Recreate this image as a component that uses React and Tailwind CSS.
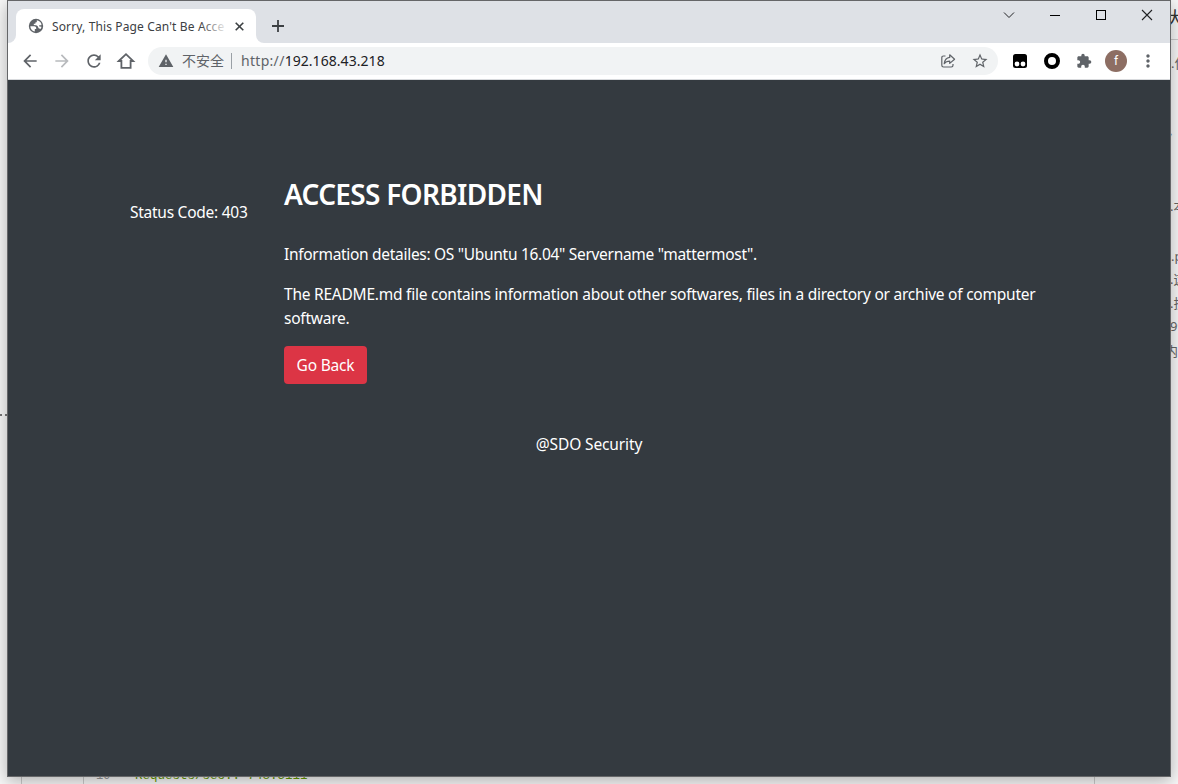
import React from 'react';
import { MdArrowBack, MdArrowForward, MdRefresh, MdStarBorder, MdExtension, MdWarning, MdMoreVert } from 'react-icons/md';

function Globe() {
  return (
    <svg className="h-4 w-4 shrink-0" viewBox="0 0 16 16">
      <circle cx="8" cy="8" r="7.2" fill="#5f6368" />
      <path d="M2.300 8.300H6.200C7.600 8.300 8.200 9 8.200 10V11H6.800V13.600C4.300 13.200 2.400 11 2.300 8.300ZM8.800 2.300C11 2.500 12.700 4 13.400 6.100V7.200H11.800C10.800 7.200 10.700 8.400 11.700 8.500L13.500 8.700C13.300 9.500 13 10.200 12.500 10.900L10.600 10.200C10 8.400 9.200 7.500 7.800 7.300L5.800 7.100V5.800H7.300L7.600 4.200H8.800Z" fill="#fff" />
    </svg>
  );
}

function HomeIcon() {
  return (
    <svg className="h-5 w-5" viewBox="0 0 20 20" fill="none" stroke="#5f6368" strokeWidth="1.8">
      <path d="M2.800 10 10 3.200 17.200 10H14.600v6.800H5.400V10Z" />
    </svg>
  );
}

function ShareIcon() {
  return (
    <svg className="h-4 w-4" viewBox="0 0 16 16" fill="none" stroke="#5f6368" strokeWidth="1.200">
      <path d="M5.500 3H3.500Q1.800 3 1.800 4.700v7.600q0 1.700 1.700 1.700h7.800q1.700 0 1.700-1.700V11" />
      <path d="M9.700 1.800 14.600 6.200 9.700 10.400V8.100C7.300 8.100 5.500 8.900 4.200 10.700 4.600 7.100 6.400 4.900 9.700 4.400Z" strokeLinejoin="round" />
    </svg>
  );
}

function WindowControls() {
  return (
    <div className="flex h-7 text-[#202124]">
      <div className="flex w-[46px] items-center justify-center">
        <svg className="h-3 w-3" viewBox="0 0 12 12" fill="none" stroke="currentColor"><path d="M1 3.500 6 8.500 11 3.500" /></svg>
      </div>
      <div className="flex w-[46px] items-center justify-center"><span className="h-px w-2.5 bg-black" /></div>
      <div className="flex w-[46px] items-center justify-center"><span className="h-2.5 w-2.5 border border-black" /></div>
      <div className="flex w-[46px] items-center justify-center">
        <svg className="h-3 w-3" viewBox="0 0 12 12" fill="none" stroke="currentColor" strokeWidth="1.100"><path d="M1 1 11 11M11 1 1 11" /></svg>
      </div>
    </div>
  );
}

function TabStrip() {
  return (
    <div className="flex h-[42px] justify-between bg-[#dee1e6]">
      <div className="flex">
        <div className="flex w-2 items-end bg-white">
          <span className="h-full w-2 rounded-br-lg bg-[#dee1e6]" />
        </div>
        <div className="flex bg-[#dee1e6] pt-2">
          <div className="flex h-[34px] w-[240px] items-center rounded-t-lg bg-white pl-3">
            <Globe />
            <div className="relative ml-2 w-[176px] overflow-hidden pt-px font-['Noto_Sans','Noto_Sans_CJK_SC',sans-serif] text-[12px] leading-[18px] whitespace-nowrap text-[#3c4043]">
              <span className="tracking-[0.13px]">Sorry, This Page Can't Be Acce</span>
              <span className="absolute inset-y-0 right-0 w-7 bg-linear-to-r from-white/0 to-white" />
            </div>
            <svg className="ml-[7px] h-[9px] w-[9px]" viewBox="0 0 9 9" fill="none" stroke="#3c4043" strokeWidth="1.600"><path d="M.7.7 8.300 8.300M8.300.7.7 8.300" /></svg>
          </div>
        </div>
        <div className="flex w-2 bg-white">
          <span className="h-full w-2 rounded-bl-lg bg-[#dee1e6]" />
        </div>
        <svg className="mt-[19px] ml-2 h-3 w-3" viewBox="0 0 12 12" fill="none" stroke="#3c4043" strokeWidth="1.800"><path d="M6 0V12M0 6H12" /></svg>
      </div>
      <WindowControls />
    </div>
  );
}

function Toolbar() {
  return (
    <div className="flex h-[37px] items-center border-b border-[#d8dadd] bg-white px-3 text-[#5f6368]">
      <div className="flex gap-3">
        <MdArrowBack size={20} />
        <MdArrowForward size={20} className="text-[#b8babd]" />
        <MdRefresh size={20} />
        <HomeIcon />
      </div>
      <div className="ml-3 flex h-7 w-[850px] items-center rounded-full bg-[#f1f3f4] pr-[9px] pl-2.5 font-['Noto_Sans','Noto_Sans_CJK_SC',sans-serif] text-[14px] leading-5">
        <MdWarning size={16} />
        <span className="ml-2 w-[42px]">不安全</span>
        <span className="ml-[7px] h-4 w-px bg-[#9aa0a6]" />
        <span className="ml-[9px]"><span className="tracking-[0.3px]">http://</span><span className="tracking-[0.05px] text-[#202124]">192.168.43.218</span></span>
        <span className="ml-auto flex items-center gap-[15px]">
          <ShareIcon />
          <MdStarBorder size={18} />
        </span>
      </div>
      <div className="ml-[15px] flex items-center">
        <svg className="h-3.5 w-3.5" viewBox="0 0 14 14">
          <rect width="14" height="14" rx="2.500" fill="#000" />
          <circle cx="4" cy="10" r="2.400" fill="#fff" /><circle cx="10" cy="10" r="2.400" fill="#fff" />
        </svg>
        <span className="ml-[17px] h-4 w-4 rounded-full border-4 border-black" />
        <MdExtension size={16} className="ml-4" />
        <span className="ml-[13px] flex h-[22px] w-[22px] items-center justify-center rounded-full bg-[#8d6e63] font-['Roboto',sans-serif] text-[12px] leading-none text-white">f</span>
        <MdMoreVert size={20} className="ml-[11px]" />
      </div>
    </div>
  );
}

function PageContent() {
  return (
    <main className="flex-1 bg-[#343a40] pt-[93px] font-['Noto_Sans',sans-serif] text-[15.500px] leading-6 text-white">
      <div className="flex">
        <div className="w-[276px] pt-[27px] pl-[122px] whitespace-nowrap"><span className="tracking-[-0.26px]">Status Code: 403</span></div>
        <div>
          <h1 className="mt-[4px] text-[28px] leading-[34px] font-semibold whitespace-nowrap"><span className="tracking-[-0.7px]">ACCESS FORBIDDEN</span></h1>
          <p className="mt-[31px] whitespace-nowrap"><span className="tracking-[-0.3px]">Information detailes: OS "Ubuntu 16.04" Servername "mattermost".</span></p>
          <p className="mt-4 whitespace-nowrap"><span className="tracking-[-0.235px]">The README.md file contains information about other softwares, files in a directory or archive of computer<br />software.</span></p>
          <button className="mt-4 flex h-[38px] w-[83px] items-center justify-center rounded bg-[#dc3545] whitespace-nowrap"><span className="tracking-[-0.2px]">Go Back</span></button>
        </div>
      </div>
      <footer className="mt-12 text-center"><span className="tracking-[-0.12px]">@SDO Security</span></footer>
    </main>
  );
}

function BackgroundPage() {
  return (
    <div className="absolute inset-0 overflow-hidden font-['Noto_Sans','Noto_Sans_CJK_SC',sans-serif] text-[13px] leading-4 whitespace-nowrap text-[#666]">
      <div className="absolute top-[39px] right-0 h-px w-2 bg-[#ccc]" />
      <span className="absolute top-[8px] left-[1166px] text-[18px] leading-5 text-[#333]">大</span>
      <span className="absolute top-[55px] left-[1171px]">.作</span>
      <span className="absolute top-[122px] left-[1169px]">,</span>
      <span className="absolute top-[198px] left-[1170px]">.本</span>
      <span className="absolute top-[248px] left-[1171px]">.p</span>
      <span className="absolute top-[271px] left-[1170px]">.这</span>
      <span className="absolute top-[295px] left-[1170px]">.技</span>
      <span className="absolute top-[318px] left-[1170px]">99</span>
      <span className="absolute top-[343px] left-[1165px]">内容</span>
      <div className="absolute top-[414px] left-0 w-[7px] border-t-2 border-dotted border-[#777]" />
      <div className="absolute top-[770px] left-[21px] h-4 w-px bg-[#ccc]" />
      <div className="absolute top-[770px] left-[83px] h-4 w-px bg-[#ccc]" />
      <div className="absolute top-[770px] left-[1094px] h-4 w-px bg-[#ccc]" />
      <span className="absolute top-[768px] left-[96px] font-['Liberation_Mono',monospace] text-[12px] text-[#999]">19</span>
      <span className="absolute top-[768px] left-[135px] font-['Liberation_Mono',monospace] text-[12.500px] text-[#690]">Requests/sec.: 748.5111</span>
    </div>
  );
}

export default function App() {
  return (
    <div className="relative h-[784px] w-[1178px] overflow-hidden bg-[#f8f8f8]">
      <BackgroundPage />
      <div className="relative ml-[7px] flex h-[777px] w-[1164px] flex-col border border-[#656668] shadow-[0_4px_16px_rgba(0,0,0,0.3)]">
        <TabStrip />
        <Toolbar />
        <PageContent />
      </div>
    </div>
  );
}
